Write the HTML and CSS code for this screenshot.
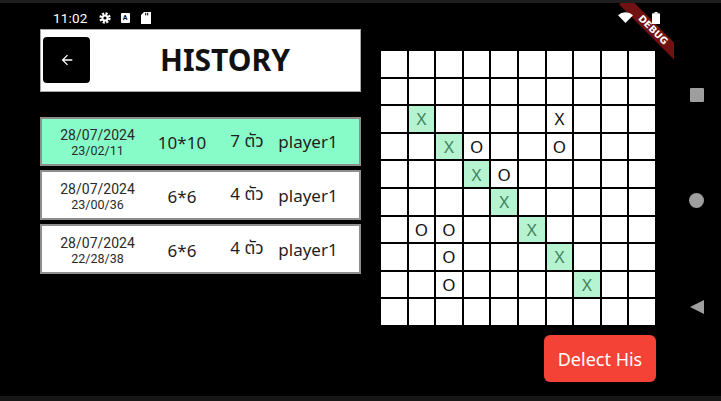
FILE: index.html
```html
<!DOCTYPE html>
<html lang="th">
<head>
<meta charset="utf-8">
<title>History</title>
<link rel="stylesheet" href="styles.css">
</head>
<body>
<div class="screen">
  <div class="app">
    <div class="statusbar">
      <span class="time">11:02</span>
      <svg class="gear" width="12" height="12" viewBox="0 0 12 12"><circle cx="6" cy="6" r="4.4" fill="none" stroke="#fff" stroke-width="2.6" stroke-dasharray="2.1 1.35"/><circle cx="6" cy="6" r="3.6" fill="#fff"/><circle cx="6" cy="6" r="1.6" fill="#000"/></svg>
      <span class="a-icon">A</span>
      <svg class="sd" width="10" height="12" viewBox="0 0 10 12"><path d="M3 0H10V12H0V3Z" fill="#fff"/><rect x="4.2" y="0.8" width="1" height="2.6" fill="#000"/><rect x="6.2" y="0.8" width="1" height="2.6" fill="#000"/></svg>
      <div class="spacer"></div>
      <svg class="wifi" width="15" height="11" viewBox="0 0 15 11"><path d="M7.5 11L0 3.2A11 11 0 0 1 15 3.2Z" fill="#fff"/></svg>
      <svg class="battery" width="8" height="12" viewBox="0 0 8 12"><rect x="2.5" y="0" width="3" height="1.5" fill="#fff"/><rect x="0" y="1.3" width="8" height="10.7" rx="0.6" fill="#fff"/></svg>
    </div>
    <div class="content">
      <div class="left">
        <div class="header">
          <button class="back" aria-label="back"><svg width="16" height="16" viewBox="0 0 24 24"><path d="M20 11H7.83l5.59-5.59L12 4l-8 8 8 8 1.41-1.41L7.83 13H20v-2z" fill="#fff"/></svg></button>
          <h1 class="title">HISTORY</h1>
        </div>
        <div class="list">
          <div class="row selected">
            <div class="col when"><span class="date">28/07/2024</span><span class="clock">23/02/11</span></div>
            <div class="col size">10*10</div>
            <div class="col count">7 ตัว</div>
            <div class="col player">player1</div>
          </div>
          <div class="row">
            <div class="col when"><span class="date">28/07/2024</span><span class="clock">23/00/36</span></div>
            <div class="col size">6*6</div>
            <div class="col count">4 ตัว</div>
            <div class="col player">player1</div>
          </div>
          <div class="row">
            <div class="col when"><span class="date">28/07/2024</span><span class="clock">22/28/38</span></div>
            <div class="col size">6*6</div>
            <div class="col count">4 ตัว</div>
            <div class="col player">player1</div>
          </div>
        </div>
      </div>
      <div class="right">
        <div class="board">
          <div class="cell"></div><div class="cell"></div><div class="cell"></div><div class="cell"></div><div class="cell"></div><div class="cell"></div><div class="cell"></div><div class="cell"></div><div class="cell"></div><div class="cell"></div>
          <div class="cell"></div><div class="cell"></div><div class="cell"></div><div class="cell"></div><div class="cell"></div><div class="cell"></div><div class="cell"></div><div class="cell"></div><div class="cell"></div><div class="cell"></div>
          <div class="cell"></div><div class="cell win">X</div><div class="cell"></div><div class="cell"></div><div class="cell"></div><div class="cell"></div><div class="cell">X</div><div class="cell"></div><div class="cell"></div><div class="cell"></div>
          <div class="cell"></div><div class="cell"></div><div class="cell win">X</div><div class="cell">O</div><div class="cell"></div><div class="cell"></div><div class="cell">O</div><div class="cell"></div><div class="cell"></div><div class="cell"></div>
          <div class="cell"></div><div class="cell"></div><div class="cell"></div><div class="cell win">X</div><div class="cell">O</div><div class="cell"></div><div class="cell"></div><div class="cell"></div><div class="cell"></div><div class="cell"></div>
          <div class="cell"></div><div class="cell"></div><div class="cell"></div><div class="cell"></div><div class="cell win">X</div><div class="cell"></div><div class="cell"></div><div class="cell"></div><div class="cell"></div><div class="cell"></div>
          <div class="cell"></div><div class="cell">O</div><div class="cell">O</div><div class="cell"></div><div class="cell"></div><div class="cell win">X</div><div class="cell"></div><div class="cell"></div><div class="cell"></div><div class="cell"></div>
          <div class="cell"></div><div class="cell"></div><div class="cell">O</div><div class="cell"></div><div class="cell"></div><div class="cell"></div><div class="cell win">X</div><div class="cell"></div><div class="cell"></div><div class="cell"></div>
          <div class="cell"></div><div class="cell"></div><div class="cell">O</div><div class="cell"></div><div class="cell"></div><div class="cell"></div><div class="cell"></div><div class="cell win">X</div><div class="cell"></div><div class="cell"></div>
          <div class="cell"></div><div class="cell"></div><div class="cell"></div><div class="cell"></div><div class="cell"></div><div class="cell"></div><div class="cell"></div><div class="cell"></div><div class="cell"></div><div class="cell"></div>
        </div>
        <button class="delete">Delect His</button>
      </div>
    </div>
    <div class="debug">DEBUG</div>
  </div>
  <nav class="navbar">
    <span class="nav-square"></span>
    <span class="nav-circle"></span>
    <span class="nav-back"></span>
  </nav>
</div>
</body>
</html>
```
FILE: styles.css
```css
* { box-sizing: border-box; }
html, body { margin: 0; padding: 0; background: #000; }
body { font-family: "Noto Sans", "Noto Sans Thai", "Loma", "DejaVu Sans", sans-serif; }

.screen {
  width: 721px;
  height: 401px;
  display: flex;
  border-top: 3px solid #1f1f1f;
  border-bottom: 5px solid #171717;
  background: #000;
  overflow: hidden;
}

.app {
  position: relative;
  width: 674px;
  overflow: hidden;
  display: flex;
  flex-direction: column;
}

.statusbar {
  position: relative;
  z-index: 2;
  height: 26px;
  display: flex;
  align-items: center;
  padding: 3px 14px 0 53px;
  color: #fff;
}
.time { font-family: Roboto, "Noto Sans", sans-serif; font-size: 13.5px; letter-spacing: 0.2px; }
.gear { margin-left: 11px; }
.a-icon {
  margin-left: 10px;
  width: 9px;
  height: 10px;
  background: #fff;
  color: #000;
  border-radius: 1px;
  font-family: Roboto, sans-serif;
  font-weight: 700;
  font-size: 7px;
  line-height: 10px;
  text-align: center;
}
.sd { margin-left: 11px; }
.spacer { flex: 1; }
.battery { margin-left: 19px; }

.content {
  display: flex;
  padding-left: 40px;
}

.left { width: 321px; }

.header {
  height: 63px;
  background: #fff;
  border: 1px solid #a8a8a8;
  display: flex;
  align-items: center;
  padding: 0 0 1px 2px;
}
.back {
  width: 47px;
  height: 46px;
  background: #000;
  border: none;
  border-radius: 4px;
  display: flex;
  align-items: center;
  justify-content: center;
  padding: 0;
}
.title {
  flex: 1;
  margin: 0;
  text-align: center;
  font-size: 30px;
  font-weight: 700;
  color: #111;
  line-height: 1;
}

.list {
  margin-top: 25px;
  display: flex;
  flex-direction: column;
  gap: 4px;
}
.row {
  height: 50px;
  background: #fff;
  border: 2px solid #8e8e8e;
  display: flex;
  align-items: center;
  color: #1e1e1e;
}
.row.selected { background: #88fcc8; height: 49px; }
.col {
  display: flex;
  justify-content: center;
  white-space: nowrap;
}
.when {
  width: 111px;
  flex-direction: column;
  align-items: center;
  color: #2a2a2a;
  padding-top: 2px;
  font-family: Roboto, "Noto Sans", sans-serif;
}
.date { font-size: 14px; line-height: 16px; }
.clock { font-size: 12.5px; line-height: 15px; }
.size { width: 58px; font-size: 17px; padding-top: 2px; }
.count { width: 72px; font-size: 17px; }
.player { width: 50px; font-size: 17px; }

.right {
  width: 275px;
  margin-left: 20px;
  display: flex;
  flex-direction: column;
}
.board {
  margin-top: 22px;
  width: 274px;
  height: 274px;
  display: grid;
  grid-template-columns: repeat(10, 1fr);
  grid-template-rows: repeat(10, 1fr);
  gap: 2px;
}
.cell {
  background: #fff;
  display: flex;
  align-items: center;
  justify-content: center;
  font-size: 17px;
  color: #111;
  line-height: 1;
}
.cell.win { background: #b6f3d0; color: #3f8460; }

.delete {
  align-self: flex-end;
  margin-top: 10px;
  width: 112px;
  height: 47px;
  background: #f44336;
  color: #fff;
  border: none;
  border-radius: 6px;
  font-family: "Noto Sans", sans-serif;
  font-size: 18px;
  padding: 0;
}

.debug {
  position: absolute;
  z-index: 1;
  left: 611px;
  top: 21px;
  width: 84px;
  height: 12px;
  transform: rotate(45deg);
  background: rgba(163, 24, 24, 0.7);
  color: #fff;
  font-family: "DejaVu Sans", sans-serif;
  font-weight: 700;
  font-size: 9.5px;
  line-height: 12px;
  text-align: center;
}

.navbar {
  flex: 1;
  display: flex;
  flex-direction: column;
  align-items: center;
  padding-top: 85px;
  padding-right: 2px;
}
.nav-square {
  width: 14px;
  height: 14px;
  background: #9e9e9e;
  border-radius: 1px;
}
.nav-circle {
  margin-top: 91px;
  width: 15px;
  height: 15px;
  border-radius: 50%;
  background: #9e9e9e;
}
.nav-back {
  margin-top: 92px;
  width: 0;
  height: 0;
  border-top: 7.5px solid transparent;
  border-bottom: 7.5px solid transparent;
  border-right: 14px solid #9e9e9e;
}
```
